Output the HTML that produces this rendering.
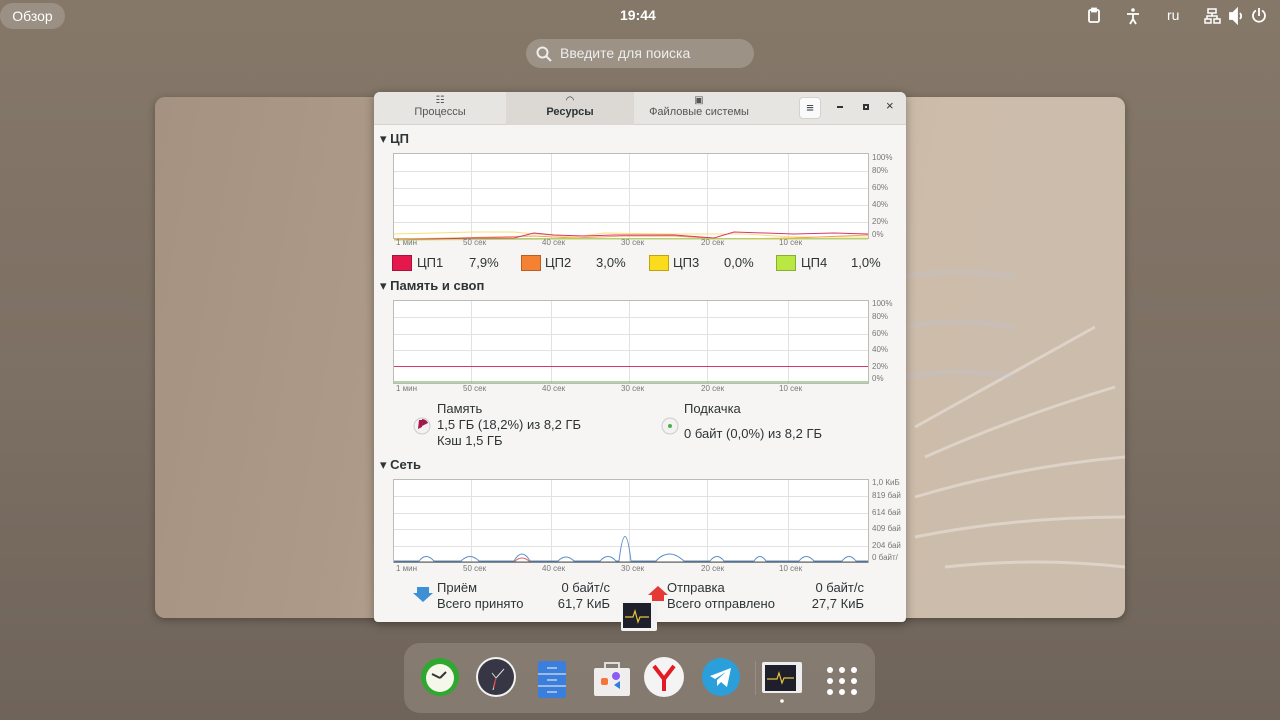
<!DOCTYPE html>
<html><head><meta charset="utf-8"><style>
*{margin:0;padding:0;box-sizing:border-box}
body{width:1280px;height:720px;overflow:hidden;font-family:"Liberation Sans","DejaVu Sans",sans-serif;background:linear-gradient(180deg,#857869 0%,#7d7064 50%,#6f645a 100%);position:relative;color:#2e3436}
.abs{position:absolute}
.top{color:#fff;font-size:14px}
.card{left:155px;top:97px;width:970px;height:521px;border-radius:10px;background:linear-gradient(100deg,#a69281 0%,#ad9a88 25%,#c4b19e 55%,#cdbcaa 75%,#cbbcad 100%);box-shadow:0 2px 8px rgba(0,0,0,.3);overflow:hidden}
.win{left:374px;top:92px;width:532px;height:530px;background:#f6f5f4;border-radius:6px 6px 4px 4px;box-shadow:0 2px 10px rgba(0,0,0,.35);overflow:hidden}
.hdr{height:33px;background:#e7e5e2;border-bottom:1px solid #d6d3cf;position:relative}
.tab{position:absolute;top:0;height:33px;text-align:center;font-size:11px;color:#555}
.sec{position:absolute;font-size:13px;font-weight:bold;color:#2e3436}
.lab{font-size:8px;fill:#777;font-family:"Liberation Sans",sans-serif}
.t{position:absolute;font-size:13px;color:#2e3436}
.sw{position:absolute;width:20px;height:16px;border:1px solid rgba(0,0,0,.25)}
</style></head><body>
<div class="abs" style="left:0;top:3px;width:65px;height:26px;border-radius:13px;background:rgba(255,255,255,.18);color:#fff;font-size:14px;line-height:26px;text-align:center">Обзор</div>
<div class="abs top" style="left:620px;top:7px;font-weight:bold">19:44</div>
<svg class="abs" style="left:1086px;top:7px" width="190" height="18" viewBox="0 0 190 18" fill="none" stroke="#fff" stroke-width="1.8">
<rect x="3" y="3" width="10" height="12" rx="1.5"/><rect x="6" y="1.5" width="4" height="3" fill="#fff"/>
<circle cx="47" cy="3" r="1.8" fill="#fff" stroke="none"/><path d="M41 7h12M47 7v5M47 12l-3 5M47 12l3 5"/>
<path d="M122 2h8v4h-8zM119 12h6v4h-6zM128 12h6v4h-6zM126 6v3M121 12v-3h10v3" stroke-width="1.5"/>
<path d="M144 6h3l4-4v14l-4-4h-3z" fill="#fff"/><path d="M154 6c1.5 2 1.5 4 0 6"/>
<path d="M170 3.5a6 6 0 1 0 6 0M173 1v8"/>
</svg>
<div class="abs top" style="left:1167px;top:7px">ru</div>
<div class="abs" style="left:526px;top:39px;width:228px;height:29px;border-radius:15px;background:rgba(255,255,255,.2);color:#eee;font-size:14px;line-height:29px;padding-left:34px">Введите для поиска</div>
<svg class="abs" style="left:536px;top:46px" width="16" height="16" fill="none" stroke="#eee" stroke-width="2"><circle cx="6.5" cy="6.5" r="5"/><path d="M10 10l5 5"/></svg>
<div class="abs card">
 <svg width="970" height="521" style="position:absolute;left:0;top:0">
  <g stroke="rgba(255,255,255,.35)" stroke-width="3" fill="none">
   <path d="M760 330 Q850 280 940 230"/><path d="M770 360 Q860 320 960 290"/><path d="M760 400 Q860 370 970 360"/>
   <path d="M760 440 Q860 420 970 420"/><path d="M790 470 Q880 460 970 470"/>
  </g>
  <g stroke="rgba(190,195,210,.25)" stroke-width="6" fill="none">
   <path d="M750 180 Q800 170 860 180"/><path d="M750 230 Q800 220 860 230"/><path d="M750 280 Q800 270 860 280"/>
  </g>
 </svg>
</div>

<div class="abs win">
 <div class="hdr">
  <div class="tab" style="left:0;width:132px"><div style="margin-top:3px;font-size:10px;font-weight:bold">☷</div><div>Процессы</div></div>
  <div class="tab" style="left:132px;width:128px;background:#dcd9d5;color:#2e3436;font-weight:bold"><div style="margin-top:3px;font-size:10px">◠</div><div>Ресурсы</div></div>
  <div class="tab" style="left:260px;width:130px"><div style="margin-top:3px;font-size:10px;font-weight:bold">▣</div><div>Файловые системы</div></div>
  <div class="abs" style="left:425px;top:5px;width:22px;height:22px;background:#fafafa;border:1px solid #d5d2ce;border-radius:4px;text-align:center;line-height:20px;font-size:13px">≡</div>
  <div class="abs" style="left:463px;top:14px;width:6px;height:2px;background:#333"></div>
  <div class="abs" style="left:489px;top:12px;width:6px;height:6px;border:2px solid #333"></div>
  <div class="abs" style="left:512px;top:6px;font-size:13px;color:#333">×</div>
 </div>
 <div class="sec" style="left:6px;top:39px">▾ ЦП</div>
 <div class="sec" style="left:6px;top:186px">▾ Память и своп</div>
 <div class="sec" style="left:6px;top:365px">▾ Сеть</div>
 <svg class="abs" style="left:0;top:0" width="532" height="530">
  <g fill="#fff" stroke="#bbb" stroke-width="1"><rect x="19.5" y="61.5" width="475" height="85"/><rect x="19.5" y="208.5" width="475" height="83"/><rect x="19.5" y="387.5" width="475" height="83"/></g>
  <g stroke="#e2e2e2" stroke-width="1">
   <path d="M97.5 62v84M177.5 62v84M255.5 62v84M333.5 62v84M414.5 62v84M20 79.5h474M20 96.5h474M20 113.5h474M20 130.5h474"/>
   <path d="M97.5 209v82M177.5 209v82M255.5 209v82M333.5 209v82M414.5 209v82M20 225.5h474M20 242.5h474M20 258.5h474M20 274.5h474"/>
   <path d="M97.5 388v82M177.5 388v82M255.5 388v82M333.5 388v82M414.5 388v82M20 404.5h474M20 421.5h474M20 437.5h474M20 454.5h474"/>
  </g>
  <polyline fill="none" stroke="#f7e17a" stroke-width="1" points="20,142 60,141 100,140 140,140 160,142 200,145 230,141 300,142 370,142 420,145 494,145"/>
  <polyline fill="none" stroke="#f5a25a" stroke-width="1" points="20,147 80,146 120,145 160,144 200,146 250,144 300,144 350,147 420,146 494,143"/>
  <polyline fill="none" stroke="#d6386a" stroke-width="1" points="20,148 100,146 140,146 160,141 180,143 210,144 240,143 300,143 340,146 360,140 420,142 460,141 494,142"/>
  <polyline fill="none" stroke="#b4dd55" stroke-width="1" points="20,148 200,147 494,147"/>
  <path d="M20 274.5h474" stroke="#d6386a" stroke-width="1"/>
  <path d="M20 290h474" stroke="#6aa84f" stroke-width="1"/>
  <path d="M20 469 L45 469 Q52 460 60 469 L87 469 Q96 460 105 469 L140 469 Q148 455 156 469 L184 469 Q192 461 200 469 L226 469 Q234 460 242 469 L245 469 Q251 420 257 469 L282 469 Q288 462 296 462 Q302 462 310 469 L336 469 Q343 460 350 469 L380 469 Q386 460 392 469 L425 469 Q432 460 440 469 L468 469 Q475 460 482 469 L494 469" fill="none" stroke="#5b8fc7" stroke-width="1"/>
  <path d="M20 470 L140 470 Q148 462 156 470 L494 470" fill="none" stroke="#e56161" stroke-width="1"/>
  <path d="M20 470 L494 470" stroke="#555" stroke-width="1"/>
  <g class="lab">
   <text x="498" y="68">100%</text><text x="498" y="81">80%</text><text x="498" y="98">60%</text><text x="498" y="115">40%</text><text x="498" y="132">20%</text><text x="498" y="145">0%</text>
   <text x="498" y="214">100%</text><text x="498" y="227">80%</text><text x="498" y="244">60%</text><text x="498" y="260">40%</text><text x="498" y="277">20%</text><text x="498" y="289">0%</text>
   <text x="498" y="393">1,0 КиБ</text><text x="498" y="406">819 бай</text><text x="498" y="423">614 бай</text><text x="498" y="439">409 бай</text><text x="498" y="456">204 бай</text><text x="498" y="468">0 байт/</text>
   <text x="22" y="153">1 мин</text><text x="89" y="153">50 сек</text><text x="168" y="153">40 сек</text><text x="247" y="153">30 сек</text><text x="327" y="153">20 сек</text><text x="405" y="153">10 сек</text>
   <text x="22" y="299">1 мин</text><text x="89" y="299">50 сек</text><text x="168" y="299">40 сек</text><text x="247" y="299">30 сек</text><text x="327" y="299">20 сек</text><text x="405" y="299">10 сек</text>
   <text x="22" y="479">1 мин</text><text x="89" y="479">50 сек</text><text x="168" y="479">40 сек</text><text x="247" y="479">30 сек</text><text x="327" y="479">20 сек</text><text x="405" y="479">10 сек</text>
  </g>
  <circle cx="48" cy="334" r="8" fill="#f4f2f0" stroke="#ccc"/><path d="M48 334V327A7 7 0 0 1 54 331Z" fill="#a3174b"/><path d="M45 328h3v7l-4 2z" fill="#a3174b"/>
  <circle cx="296" cy="334" r="8" fill="#f4f2f0" stroke="#ccc"/><circle cx="296" cy="334" r="2" fill="#4caf50"/>
  <path d="M43 495h12v6h4l-10 9-10-9h4z" fill="#3d8fd6"/>
  <path d="M278 509h12v-6h4l-10-9-10 9h4z" fill="#e53935"/>
 </svg>
 <div class="sw" style="left:18px;top:163px;background:#e5184e"></div><div class="t" style="left:43px;top:163px">ЦП1</div><div class="t" style="left:95px;top:163px">7,9%</div>
 <div class="sw" style="left:147px;top:163px;background:#f58233"></div><div class="t" style="left:171px;top:163px">ЦП2</div><div class="t" style="left:222px;top:163px">3,0%</div>
 <div class="sw" style="left:275px;top:163px;background:#fbdc1d"></div><div class="t" style="left:299px;top:163px">ЦП3</div><div class="t" style="left:350px;top:163px">0,0%</div>
 <div class="sw" style="left:402px;top:163px;background:#b9e842"></div><div class="t" style="left:427px;top:163px">ЦП4</div><div class="t" style="left:477px;top:163px">1,0%</div>
 <div class="t" style="left:63px;top:309px;line-height:16px">Память<br>1,5 ГБ (18,2%) из 8,2 ГБ<br>Кэш 1,5 ГБ</div>
 <div class="t" style="left:310px;top:309px;line-height:16px">Подкачка</div>
 <div class="t" style="left:310px;top:334px">0 байт (0,0%) из 8,2 ГБ</div>
 <div class="t" style="left:63px;top:488px;line-height:16px">Приём<br>Всего принято</div>
 <div class="t" style="left:178px;top:488px;line-height:16px;text-align:right;width:58px">0 байт/с<br>61,7 КиБ</div>
 <div class="t" style="left:293px;top:488px;line-height:16px">Отправка<br>Всего отправлено</div>
 <div class="t" style="left:425px;top:488px;line-height:16px;text-align:right;width:65px">0 байт/с<br>27,7 КиБ</div>
</div>
<svg class="abs" style="left:620px;top:600px" width="38" height="32"><rect x="1" y="1" width="36" height="30" rx="2" fill="#f2f2f2"/><rect x="3" y="3" width="28" height="25" fill="#1d1f2b"/><path d="M5 17h8l2-6 3 11 2-5h9" stroke="#e8c23c" fill="none" stroke-width="1.2"/></svg>

<div class="abs" style="left:404px;top:643px;width:471px;height:70px;border-radius:16px;background:rgba(150,140,130,.55)"></div>
<svg class="abs" style="left:404px;top:643px" width="471" height="70">
 <circle cx="36" cy="34" r="19" fill="#2ea82e"/><circle cx="36" cy="35" r="14" fill="#f4f7ea"/><path d="M36 35l-8-4M36 35l6-6" stroke="#333" stroke-width="2"/>
 <circle cx="92" cy="34" r="20" fill="#f2f2f2"/><circle cx="92" cy="34" r="18" fill="#363644"/><path d="M92 35l8-9M92 35l-3 12M92 35l-4-5" stroke="#ddd" stroke-width="1"/><path d="M92 35l-2 10" stroke="#d33" stroke-width="1"/>
 <rect x="134" y="18" width="28" height="37" rx="2" fill="#3a7fdc"/><path d="M143 25h10M143 37h10M143 49h10M134 31h28M134 43h28" stroke="#dde" stroke-width="1.3"/>
 <rect x="190" y="25" width="36" height="28" rx="2" fill="#f0eeec"/><path d="M201 25v-5h14v5" stroke="#ddd" stroke-width="2" fill="none"/><circle cx="212" cy="33" r="4" fill="#8a5cf6"/><rect x="197" y="35" width="7" height="7" rx="2" fill="#f7743a"/><path d="M216 38l-6 4 6 4z" fill="#2b7fe0"/>
 <circle cx="260" cy="34" r="20" fill="#f4f4f4"/><path d="M250 23l10 13 10-13M260 36v12" stroke="#e31b23" stroke-width="4" fill="none"/>
 <circle cx="317" cy="34" r="19" fill="#2b9fd9"/><path d="M306 33l21-8-4 19-6-5-4 4 0-6 9-8-11 7z" fill="#fff"/>
 <path d="M351.5 18v34" stroke="rgba(255,255,255,.15)"/>
 <rect x="358" y="19" width="40" height="31" rx="2" fill="#eee"/><rect x="361" y="22" width="31" height="26" fill="#1d1f2b"/><path d="M363 36h10l2-6 3 10 2-5h10" stroke="#e8c23c" fill="none" stroke-width="1.2"/>
 <circle cx="378" cy="58" r="1.8" fill="#fff"/>
 <g fill="#fff"><circle cx="426" cy="27" r="3"/><circle cx="438" cy="27" r="3"/><circle cx="450" cy="27" r="3"/><circle cx="426" cy="38" r="3"/><circle cx="438" cy="38" r="3"/><circle cx="450" cy="38" r="3"/><circle cx="426" cy="49" r="3"/><circle cx="438" cy="49" r="3"/><circle cx="450" cy="49" r="3"/></g>
</svg>
</body></html>
